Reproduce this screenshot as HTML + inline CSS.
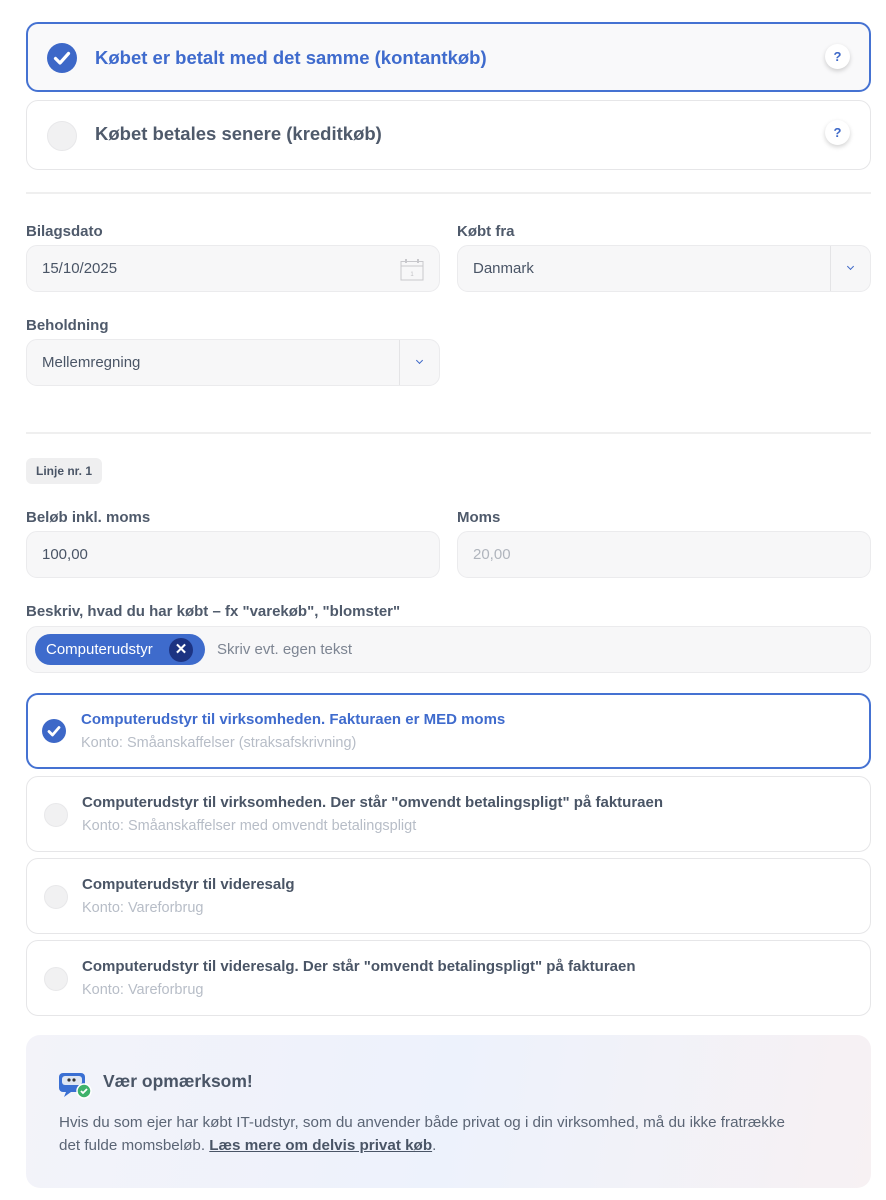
<!DOCTYPE html>
<html><head><meta charset="utf-8"><style>
*{box-sizing:border-box;margin:0;padding:0}
body{width:886px;height:1200px;background:#fff;font-family:"Liberation Sans",sans-serif;color:#4a5566;position:relative;overflow:hidden}
.abs{position:absolute}
.card{position:absolute;left:26px;width:845px;border-radius:12px}
.chk{position:absolute;border-radius:50%;background:#3d68c8}
.chk svg{position:absolute;left:0;top:0}
.q{position:absolute;right:20px;top:22px;width:25px;height:25px;border-radius:50%;background:#fff;box-shadow:0 2px 5px rgba(0,0,0,.18);color:#3d68c8;font-size:13px;font-weight:bold;text-align:center;line-height:25px}
.lbl{position:absolute;font-size:15px;font-weight:bold;color:#4f5a6b}
.inp{position:absolute;height:47px;background:#f7f7f8;border:1px solid #ebebed;border-radius:11px;font-size:15px;color:#4a5566;padding-left:15px;line-height:46px}
.dd{position:absolute;right:0;top:0;width:40px;height:45px;border-left:1px solid #e4e4e6}
.dd:after{content:"";position:absolute;left:17px;top:18px;width:4px;height:4px;border-right:1.6px solid #3d68c8;border-bottom:1.6px solid #3d68c8;transform:rotate(45deg)}
.hr{position:absolute;left:26px;width:845px;height:2px;background:#efefef}
.opt{position:absolute;left:26px;width:845px;height:76px;border:1px solid #e6e6e8;border-radius:12px;background:#fff}
.opt .t{position:absolute;left:55px;top:17px;font-size:15px;font-weight:bold;color:#4a5566}
.opt .s{position:absolute;left:55px;top:41px;font-size:14.5px;color:#b7bdc7}
.opt .r{position:absolute;left:17px;top:26px;width:24px;height:24px;border-radius:50%;background:#f1f1f2;border:1px solid #e8e8ea}
</style></head><body>

<div class="card" style="top:22px;height:70px;border:2px solid #4572d2;background:#f9f9fa">
  <div class="chk" style="left:19px;top:19px;width:30px;height:30px"><svg width="30" height="30"><path d="M8.5 15.5l4.5 4.5 8.5-9.5" stroke="#fff" stroke-width="3.2" fill="none" stroke-linecap="round" stroke-linejoin="round"/></svg></div>
  <div class="abs" style="left:67px;top:23px;font-size:18.5px;font-weight:bold;color:#3f6bcd">Købet er betalt med det samme (kontantkøb)</div>
  <div class="q" style="right:19px;top:20px">?</div>
</div>
<div class="card" style="top:100px;height:70px;border:1px solid #e6e6e8;background:#fff">
  <div class="abs" style="left:20px;top:20px;width:30px;height:30px;border-radius:50%;background:#f1f1f2;border:1px solid #e8e8ea"></div>
  <div class="abs" style="left:68px;top:22px;font-size:18.5px;font-weight:bold;color:#4f5a6b">Købet betales senere (kreditkøb)</div>
</div>
<div class="q" style="left:825px;top:120px;right:auto">?</div>

<div class="hr" style="top:192px"></div>

<div class="lbl" style="left:26px;top:223px">Bilagsdato</div>
<div class="inp" style="left:26px;top:245px;width:414px">15/10/2025
  <svg class="abs" style="right:15px;top:12px" width="24" height="23"><rect x="1" y="3.5" width="22" height="18.5" fill="none" stroke="#c8c8cc" stroke-width="1"/><line x1="1" y1="8" x2="23" y2="8" stroke="#c8c8cc"/><rect x="5" y="1" width="2" height="4" fill="#c8c8cc"/><rect x="17" y="1" width="2" height="4" fill="#c8c8cc"/><text x="12" y="18" font-size="6" fill="#c0c0c4" text-anchor="middle">1</text></svg>
</div>
<div class="lbl" style="left:457px;top:223px">Købt fra</div>
<div class="inp" style="left:457px;top:245px;width:414px">Danmark<div class="dd"></div></div>

<div class="lbl" style="left:26px;top:317px">Beholdning</div>
<div class="inp" style="left:26px;top:339px;width:414px">Mellemregning<div class="dd"></div></div>

<div class="hr" style="top:432px"></div>

<div class="abs" style="left:26px;top:458px;width:76px;height:26px;background:#efeff0;border-radius:6px;font-size:12px;font-weight:bold;color:#4a5566;text-align:center;line-height:26px">Linje nr. 1</div>

<div class="lbl" style="left:26px;top:509px">Beløb inkl. moms</div>
<div class="inp" style="left:26px;top:531px;width:414px">100,00</div>
<div class="lbl" style="left:457px;top:509px">Moms</div>
<div class="inp" style="left:457px;top:531px;width:414px;color:#b0b5bd">20,00</div>

<div class="lbl" style="left:26px;top:603px">Beskriv, hvad du har købt – fx "varekøb", "blomster"</div>
<div class="inp" style="left:26px;top:626px;width:845px;padding-left:0">
  <div class="abs" style="left:8px;top:7px;width:170px;height:31px;border-radius:16px;background:#3e6bcc;color:#fff;font-size:15px;line-height:31px;padding-left:11px">Computerudstyr
    <div class="abs" style="left:134px;top:4px;width:24px;height:24px;border-radius:50%;background:#1c3382;text-align:center;line-height:23px;font-size:15px;font-weight:bold">✕</div>
  </div>
  <div class="abs" style="left:190px;top:0;color:#7d8592">Skriv evt. egen tekst</div>
</div>

<div class="opt" style="top:693px;height:76px;border:2px solid #4572d2">
  <div class="chk" style="left:14px;top:24px;width:24px;height:24px"><svg width="24" height="24"><path d="M7 12.5l3.5 3.5 6.5-7.5" stroke="#fff" stroke-width="2.8" fill="none" stroke-linecap="round" stroke-linejoin="round"/></svg></div>
  <div class="t" style="left:53px;top:16px;color:#3f6bcd">Computerudstyr til virksomheden. Fakturaen er MED moms</div>
  <div class="s" style="left:53px;top:40px">Konto: Småanskaffelser (straksafskrivning)</div>
</div>
<div class="opt" style="top:776px"><div class="r"></div><div class="t">Computerudstyr til virksomheden. Der står "omvendt betalingspligt" på fakturaen</div><div class="s">Konto: Småanskaffelser med omvendt betalingspligt</div></div>
<div class="opt" style="top:858px"><div class="r"></div><div class="t">Computerudstyr til videresalg</div><div class="s">Konto: Vareforbrug</div></div>
<div class="opt" style="top:940px"><div class="r"></div><div class="t">Computerudstyr til videresalg. Der står "omvendt betalingspligt" på fakturaen</div><div class="s">Konto: Vareforbrug</div></div>

<div class="abs" style="left:26px;top:1035px;width:845px;height:153px;border-radius:14px;background:linear-gradient(100deg,#f3f3f9 0%,#edf2fc 50%,#f7f1f3 100%)">
  <svg class="abs" style="left:32px;top:36px" width="36" height="28"><rect x="1" y="2" width="26" height="19" rx="4" fill="#3a6fd3"/><path d="M8 21l-2 5 7-5z" fill="#3a6fd3"/><rect x="4" y="5" width="20" height="9" rx="3" fill="#dfe6f3"/><circle cx="11" cy="9" r="1.6" fill="#333"/><circle cx="16" cy="9" r="1.6" fill="#333"/><circle cx="26" cy="20" r="7" fill="#3fb26b" stroke="#fff" stroke-width="1.5"/><path d="M23 20l2 2 4-4" stroke="#fff" stroke-width="1.8" fill="none"/></svg>
  <div class="abs" style="left:77px;top:36px;font-size:17.5px;font-weight:bold;color:#4a5566">Vær opmærksom!</div>
  <div class="abs" style="left:33px;top:76px;width:745px;font-size:15.2px;line-height:23px;color:#5b6575">Hvis du som ejer har købt IT-udstyr, som du anvender både privat og i din virksomhed, må du ikke fratrække det fulde momsbeløb. <span style="font-weight:bold;text-decoration:underline;color:#4a5566">Læs mere om delvis privat køb</span>.</div>
</div>
</body></html>
